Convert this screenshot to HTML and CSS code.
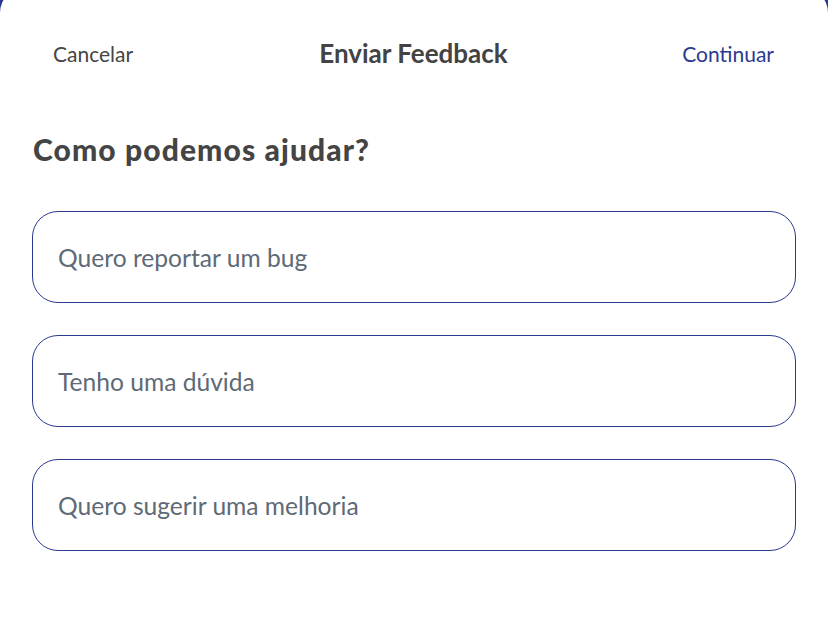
FILE: index.html
```html
<!DOCTYPE html>
<html lang="pt">
<head>
<meta charset="utf-8">
<title>Enviar Feedback</title>
<link rel="stylesheet" href="styles.css">
</head>
<body>
<div class="sheet">
  <header class="topbar">
    <button class="link link-cancel">Cancelar</button>
    <h1 class="title">Enviar Feedback</h1>
    <button class="link link-continue">Continuar</button>
  </header>
  <h2 class="question">Como podemos ajudar?</h2>
  <ul class="options">
    <li class="option">Quero reportar um bug</li>
    <li class="option">Tenho uma dúvida</li>
    <li class="option">Quero sugerir uma melhoria</li>
  </ul>
</div>
</body>
</html>
```
FILE: styles.css
```css
html, body {
  margin: 0;
  padding: 0;
  height: 100%;
}
body {
  background: #2b3a8f;
  overflow: hidden;
}
.sheet {
  background: #ffffff;
  margin-top: -13px;
  border-radius: 26px;
  min-height: 660px;
  padding-top: 46px;
  box-sizing: border-box;
}
.topbar {
  display: grid;
  grid-template-columns: 1fr auto 1fr;
  align-items: center;
  height: 40px;
  padding: 0 54px 0 53px;
}
.link {
  background: none;
  border: 0;
  padding: 0;
  font-family: "Lato", "Liberation Sans", sans-serif;
  font-size: 21px;
  cursor: pointer;
}
.link-cancel {
  justify-self: start;
  color: #454545;
}
.link-continue {
  justify-self: end;
  color: #2b3a8f;
}
.title {
  margin: 0;
  font-family: "Lato", "Liberation Sans", sans-serif;
  font-weight: 700;
  font-size: 26px;
  color: #434343;
}
.question {
  margin: 58px 0 0 33px;
  font-family: "Lato", "Liberation Sans", sans-serif;
  font-weight: 900;
  font-size: 30px;
  line-height: 36px;
  letter-spacing: 1.1px;
  color: #444444;
}
.options {
  list-style: none;
  margin: 44px 32px 0 32px;
  padding: 0;
  display: flex;
  flex-direction: column;
  gap: 32px;
}
.option {
  height: 92px;
  box-sizing: border-box;
  border: 1px solid #2b3a8f;
  border-radius: 26px;
  display: flex;
  align-items: center;
  padding-left: 25px;
  font-family: "Lato", "Liberation Sans", sans-serif;
  font-size: 24.6px;
  color: #5e6a75;
}
```
